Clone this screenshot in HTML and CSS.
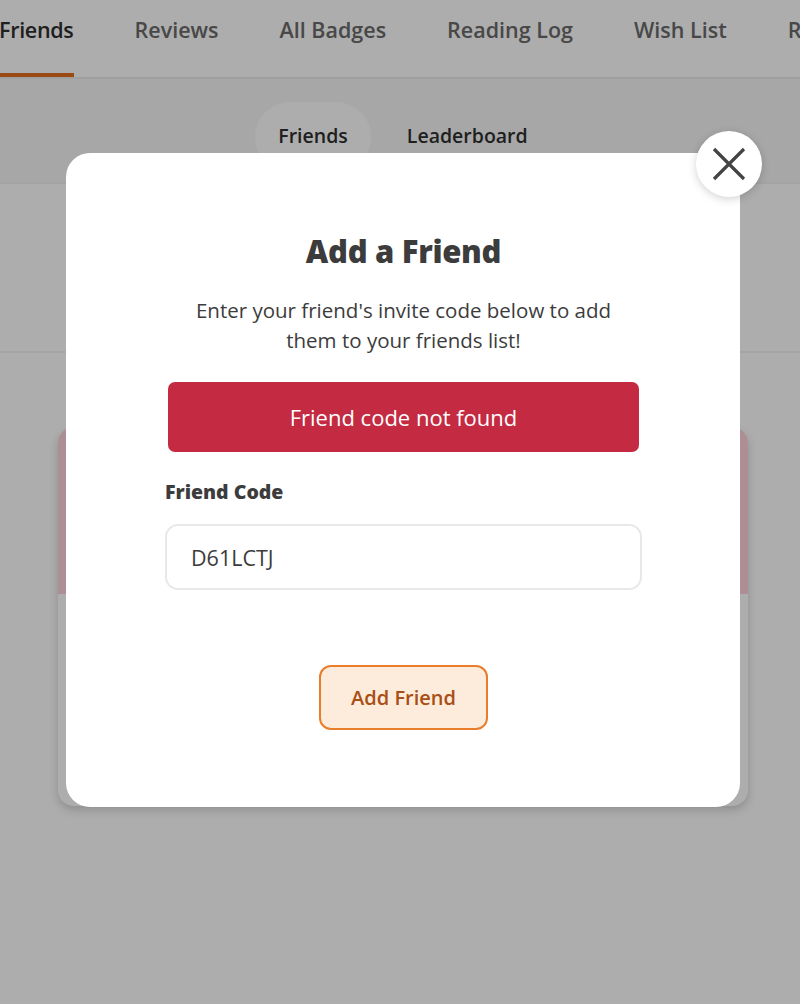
FILE: index.html
```html
<!DOCTYPE html>
<html lang="en">
<head>
<meta charset="utf-8">
<title>Add a Friend</title>
<link rel="stylesheet" href="styles.css">
</head>
<body>
<div class="page">
  <nav class="tabs">
    <a class="tab active">Friends</a>
    <a class="tab">Reviews</a>
    <a class="tab">All Badges</a>
    <a class="tab">Reading Log</a>
    <a class="tab">Wish List</a>
    <a class="tab">R</a>
  </nav>
  <div class="subtabs">
    <span class="pill active">Friends</span>
    <span class="pill">Leaderboard</span>
  </div>
  <div class="band"></div>
  <div class="content">
    <div class="card">
      <div class="card-head"></div>
      <div class="card-body"></div>
    </div>
  </div>
</div>

<div class="overlay"></div>

<div class="modal" role="dialog">
  <button class="close" aria-label="Close">
    <svg width="36" height="36" viewBox="0 0 36 36"><path d="M3 3 L33 33 M33 3 L3 33" stroke="#444" stroke-width="3.2" fill="none"/></svg>
  </button>
  <h1 class="title">Add a Friend</h1>
  <p class="desc">Enter your friend's invite code below to add<br>them to your friends list!</p>
  <div class="error">Friend code not found</div>
  <label class="label" for="code">Friend Code</label>
  <input class="input" id="code" type="text" value="D61LCTJ">
  <button class="add">Add Friend</button>
</div>
</body>
</html>
```

FILE: styles.css
```css
* { box-sizing: border-box; }
html, body { margin: 0; padding: 0; }
body {
  font-family: "Open Sans", Lato, Arial, sans-serif;
  background: #ffffff;
  width: 800px;
  height: 1004px;
  overflow: hidden;
  position: relative;
}

.page { width: 800px; height: 1004px; background: #fff; }

.tabs {
  display: flex;
  height: 79px;
  border-bottom: 2px solid #ebebeb;
  white-space: nowrap;
  overflow: hidden;
}
.tab {
  font-size: 21.5px;
  font-weight: 600;
  color: #6a6a6a;
  padding: 15px 30.5px 0 30.5px;
  position: relative;
  flex: none;
}
.tab:first-child { padding-left: 0; margin-left: -1px; letter-spacing: -0.3px; }
.tab.active { color: #2f2f2f; }
.tab.active::after {
  content: "";
  position: absolute;
  left: 0; right: 30.5px; bottom: 0;
  height: 4px;
  background: #e36f1c;
}

.subtabs {
  display: flex;
  justify-content: center;
  gap: 12px;
  padding-top: 23px;
  padding-left: 7px;
  height: 105px;
  background: #f7f7f7;
  border-bottom: 2px solid #f0f0f0;
}
.pill {
  height: 70px;
  padding: 20px 24px 0;
  font-size: 19.5px;
  font-weight: 600;
  color: #2f2f2f;
  border-radius: 35px;
}
.pill.active { background: #ffffff; padding: 20px 23px 0; }

.band {
  height: 169px;
  border-bottom: 2px solid #f3f3f3;
}

.content { padding: 74px 52px 0 58px; }
.card {
  width: 690px;
  height: 379px;
  border-radius: 16px;
  overflow: hidden;
  background: #fff;
  box-shadow: 0 4px 10px rgba(0,0,0,0.18);
}
.card-head { height: 167px; background: #ffd2dc; }

.overlay {
  position: absolute;
  inset: 0;
  background: rgba(0,0,0,0.32);
}

.modal {
  position: absolute;
  left: 66px;
  top: 153px;
  width: 674px;
  height: 654px;
  background: #fff;
  border-radius: 24px;
  padding: 0 98px 0 99px;
  display: flex;
  flex-direction: column;
  align-items: stretch;
}

.close {
  position: absolute;
  right: -22px;
  top: -22px;
  width: 66px;
  height: 66px;
  border-radius: 50%;
  background: #fff;
  border: none;
  box-shadow: 0 2px 8px rgba(0,0,0,0.18);
  display: flex;
  align-items: center;
  justify-content: center;
  padding: 0;
}

.title {
  margin: 78px 0 0;
  text-align: center;
  font-size: 31px;
  font-weight: 800;
  color: #3c3c3c;
  line-height: 40px;
  letter-spacing: -0.3px;
}

.desc {
  margin: 24px 0 0;
  text-align: center;
  font-size: 20.5px;
  line-height: 30px;
  color: #3c3c3c;
}

.error {
  margin: 27px 3px 0 3px;
  height: 70px;
  background: #c42a41;
  color: #fff;
  border-radius: 7px;
  display: flex;
  align-items: center;
  justify-content: center;
  font-size: 22px;
}

.label {
  margin-top: 28px;
  font-size: 19.5px;
  font-weight: 800;
  color: #3c3c3c;
  line-height: 24px;
}

.input {
  margin-top: 20px;
  height: 66px;
  border: 2px solid #e8e8e8;
  border-radius: 13px;
  padding: 0 24px;
  font-family: inherit;
  font-size: 21.5px;
  color: #3c3c3c;
  background: #fff;
  outline: none;
}

.add {
  align-self: center;
  margin-top: 75px;
  width: 169px;
  height: 65px;
  background: #fdebdc;
  border: 2px solid #ea7d2c;
  border-radius: 12px;
  color: #a84f14;
  font-family: inherit;
  font-size: 20px;
  font-weight: 600;
}
```
